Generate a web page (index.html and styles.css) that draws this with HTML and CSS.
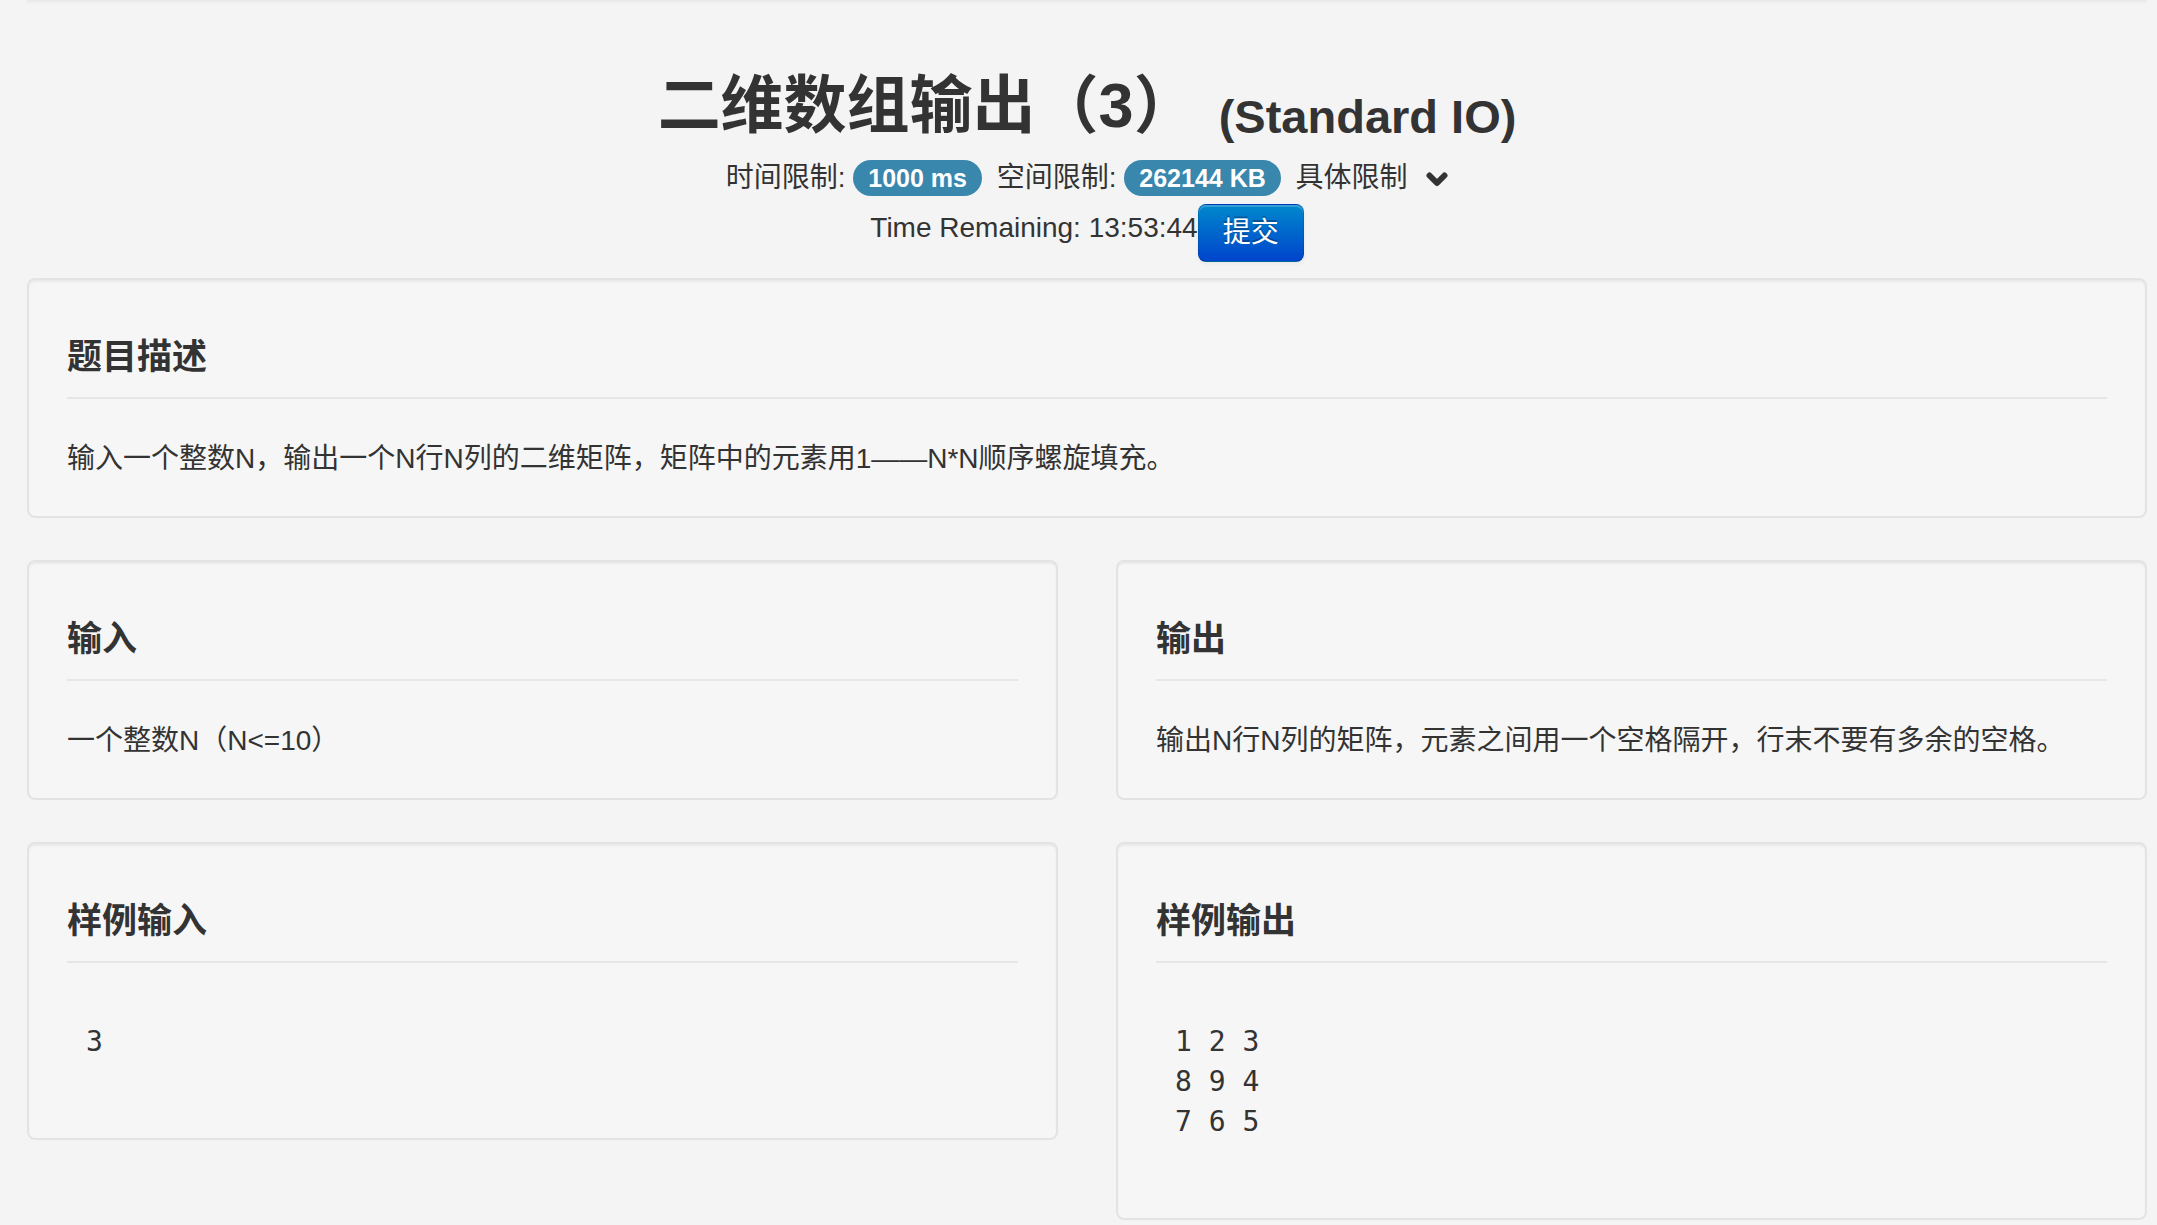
FILE: index.html
```html
<!DOCTYPE html>
<html lang="zh-CN">
<head>
<meta charset="utf-8">
<title>二维数组输出（3）</title>
<link rel="stylesheet" href="styles.css">
</head>
<body>
<div class="page">
  <div class="topshade"></div>
  <header class="header">
    <h2 class="title">二维数组输出（3）<span class="io">(Standard IO)</span></h2>
    <div class="limits">时间限制: <span class="badge">1000 ms</span> 空间限制: <span class="badge">262144 KB</span> 具体限制 <svg class="chev" width="22" height="15" viewBox="0 0 22 15" aria-hidden="true"><polyline points="3.5,3.5 11,11 18.5,3.5" fill="none" stroke="#333" stroke-width="6" stroke-linecap="round" stroke-linejoin="round"/></svg></div>
    <div class="timer">Time Remaining: 13:53:44<button class="btn" type="button">提交</button></div>
  </header>

  <section class="well">
    <h4 class="well-title">题目描述</h4>
    <hr class="rule">
    <p class="text">输入一个整数N，输出一个N行N列的二维矩阵，矩阵中的元素用1——N*N顺序螺旋填充。</p>
  </section>

  <div class="row">
    <section class="well">
      <h4 class="well-title">输入</h4>
      <hr class="rule">
      <p class="text">一个整数N（N&lt;=10）</p>
    </section>
    <section class="well">
      <h4 class="well-title">输出</h4>
      <hr class="rule">
      <p class="text">输出N行N列的矩阵，元素之间用一个空格隔开，行末不要有多余的空格。</p>
    </section>
  </div>

  <div class="row">
    <section class="well">
      <h4 class="well-title">样例输入</h4>
      <hr class="rule">
      <pre class="sample">3</pre>
    </section>
    <section class="well">
      <h4 class="well-title">样例输出</h4>
      <hr class="rule">
      <pre class="sample">1 2 3
8 9 4
7 6 5</pre>
    </section>
  </div>
</div>
</body>
</html>
```
FILE: styles.css
```css
html, body {
  margin: 0;
  padding: 0;
}
body {
  background: #f4f4f4;
  color: #333;
  font-family: "Liberation Sans", "Noto Sans CJK SC", sans-serif;
  font-size: 28px;
  line-height: 40px;
}
.page {
  padding: 0 10px 0 27px;
}
.topshade {
  height: 4px;
  background: linear-gradient(to bottom, rgba(0,0,0,0.05), rgba(0,0,0,0));
}
.header {
  text-align: center;
  padding: 68px 0 16px;
}
.title {
  margin: 0;
  font-size: 63px;
  line-height: 66px;
  font-weight: bold;
}
.title .io {
  font-size: 47px;
  line-height: 1;
  margin-left: 22px;
  vertical-align: -6px;
}
.limits {
  margin-top: 18px;
  line-height: 40px;
}
.badge {
  display: inline-block;
  background: #3a87ad;
  color: #fff;
  font-size: 25px;
  font-weight: bold;
  line-height: 24px;
  padding: 6px 15px;
  border-radius: 18px;
  margin-right: 7px;
}
.chev {
  margin-left: 11px;
  vertical-align: baseline;
}
.timer {
  margin-top: 6px;
}
.btn {
  display: inline-block;
  vertical-align: -5px;
  margin: 0;
  padding: 8px 24px;
  font-family: "Liberation Sans", "Noto Sans CJK SC", sans-serif;
  font-size: 28px;
  line-height: 40px;
  color: #fff;
  text-shadow: 0 -2px 0 rgba(0,0,0,0.25);
  background: linear-gradient(to bottom, #0088cc, #0044cc);
  border: 1px solid;
  border-color: rgba(0,0,0,0.1) rgba(0,0,0,0.1) rgba(0,0,0,0.25);
  border-radius: 8px;
  box-shadow: inset 0 2px 0 rgba(255,255,255,0.2), 0 2px 4px rgba(0,0,0,0.05);
}
.well {
  background: #f6f6f6;
  border: 2px solid #e3e3e3;
  border-radius: 8px;
  box-shadow: inset 0 2px 2px rgba(0,0,0,0.05);
  padding: 37px 38px;
  margin: 0 0 42px;
}
.row {
  display: grid;
  grid-template-columns: 1fr 1fr;
  column-gap: 58px;
  align-items: start;
}
.well-title {
  margin: 20px 0 0;
  font-size: 35px;
  line-height: 40px;
  font-weight: bold;
}
.rule {
  margin: 20px 0 40px;
  border: 0;
  border-top: 2px solid #e6e6e6;
  height: 0;
}
.text {
  margin: 0;
}
.sample {
  margin: 0 0 20px;
  padding: 18px;
  border: 1px solid transparent;
  background: none;
  font-family: "DejaVu Sans Mono", monospace;
  font-size: 28px;
  line-height: 40px;
  white-space: pre;
}
```
